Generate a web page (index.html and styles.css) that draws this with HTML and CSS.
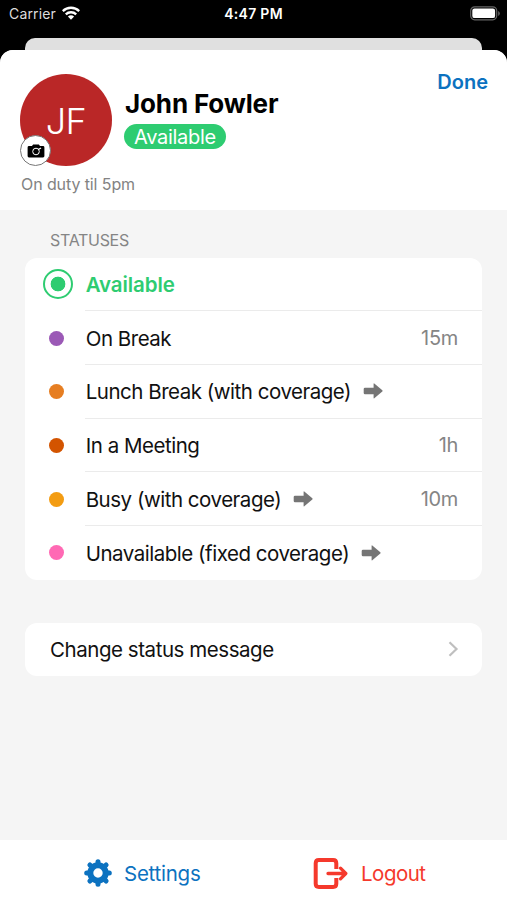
FILE: index.html
```html
<!DOCTYPE html>
<html lang="en">
<head>
<meta charset="utf-8">
<title>Status</title>
<link rel="stylesheet" href="styles.css">
</head>
<body>
<div class="statusbar">
  <div class="carrier"><span>Carrier</span>
    <svg width="18" height="14" viewBox="0 0 18 14"><g fill="none" stroke="#fff" stroke-width="2.3"><path d="M.8 5.1a11.7 11.7 0 0 1 16.4 0"/><path d="M3.8 8.4a7.4 7.4 0 0 1 10.4 0"/></g><path fill="#fff" d="M9 13.8L5.9 10.6a4.5 4.5 0 0 1 6.2 0z"/></svg>
  </div>
  <div class="clock">4:47 PM</div>
  <svg class="battery" width="31" height="15" viewBox="0 0 31 15"><rect x=".7" y=".8" width="26" height="13" rx="4" fill="none" stroke="#656565" stroke-width="1.2"/><rect x="2.3" y="2.5" width="22.8" height="9.6" rx="2.2" fill="#fff"/><path d="M28.2 5v5q1.6-.8 1.6-2.5T28.2 5" fill="#656565"/></svg>
</div>
<div class="behind"></div>
<main class="sheet">
  <header class="profile">
    <div class="person">
      <div class="avatar"><span>JF</span>
        <div class="camera"><svg width="18" height="14" viewBox="0 0 18 14"><path d="M2 2h3l1.1-1.600h5.800L13 2h3q1.400 0 1.400 1.400v8.700q0 1.400-1.400 1.400H2Q.6 13.500.6 12.100V3.400Q.6 2 2 2z"/><circle cx="9" cy="7.500" r="3.300" fill="none" stroke="#fff" stroke-width="1"/><path d="M11.400 5.500l2.600-1.500" stroke="#fff" stroke-width="1.200"/></svg></div>
      </div>
      <div class="identity"><h1>John Fowler</h1><span class="pill">Available</span></div>
      <div class="done">Done</div>
    </div>
    <p class="message">On duty til 5pm</p>
  </header>
  <section class="content">
    <h2>STATUSES</h2>
    <ul class="card">
      <li><span class="mark"><i class="radio"></i></span><div class="line selected"><span>Available</span></div></li>
      <li><span class="mark"><i class="dot purple"></i></span><div class="line"><span>On Break</span><time>15m</time></div></li>
      <li><span class="mark"><i class="dot orange"></i></span><div class="line"><span>Lunch Break (with coverage)</span><svg class="arrow" width="21" height="16" viewBox="0 0 21 16"><path d="M2 4.700h8.600V.8q0-.8.700-.3l8 6.700q.8.700 0 1.400l-8 6.700q-.7.500-.7-.3v-3.800H2q-1.300 0-1.300-1.300V6q0-1.300 1.300-1.300z"/></svg></div></li>
      <li><span class="mark"><i class="dot rust"></i></span><div class="line"><span>In a Meeting</span><time>1h</time></div></li>
      <li><span class="mark"><i class="dot amber"></i></span><div class="line"><span>Busy (with coverage)</span><svg class="arrow" width="21" height="16" viewBox="0 0 21 16"><path d="M2 4.700h8.600V.8q0-.8.700-.3l8 6.700q.8.700 0 1.400l-8 6.700q-.7.500-.7-.3v-3.800H2q-1.300 0-1.300-1.300V6q0-1.300 1.300-1.300z"/></svg><time>10m</time></div></li>
      <li><span class="mark"><i class="dot pink"></i></span><div class="line"><span>Unavailable (fixed coverage)</span><svg class="arrow" width="21" height="16" viewBox="0 0 21 16"><path d="M2 4.700h8.600V.8q0-.8.700-.3l8 6.700q.8.700 0 1.400l-8 6.700q-.7.500-.7-.3v-3.800H2q-1.300 0-1.300-1.300V6q0-1.300 1.300-1.300z"/></svg></div></li>
    </ul>
    <div class="card change"><span>Change status message</span><svg width="12" height="18" viewBox="0 0 12 18"><path d="M2.500 2.300L9.500 9l-7 6.700" fill="none" stroke="#bfbfbf" stroke-width="2.200"/></svg></div>
  </section>
  <footer>
    <div class="action settings"><svg width="28" height="28" viewBox="-14 -14 28 28"><circle r="7.700" fill="none" stroke="currentColor" stroke-width="6"/><g stroke="currentColor" stroke-width="5" stroke-linecap="round"><path d="M0-9v-2.300M0 9v2.300M9 0h2.300M-9 0h-2.300M6.700-6.700l1.400-1.400M-6.700-6.700l-1.400-1.400M6.700 6.700l1.400 1.400M-6.700 6.700l-1.400 1.400"/></g></svg><span>Settings</span></div>
    <div class="action logout"><svg width="35" height="31" viewBox="0 0 35 31"><g fill="none" stroke="currentColor"><path d="M23.300 11V5.300q0-3.200-3.200-3.200H5.900q-3.200 0-3.200 3.200v20.400q0 3.200 3.200 3.200h14.200q3.200 0 3.200-3.200V20" stroke-width="4"/><path d="M15 15.500h17M27.500 10.200l5.300 5.300-5.300 5.300" stroke-width="3.300" stroke-linecap="round" stroke-linejoin="round"/></g></svg><span>Logout</span></div>
  </footer>
</main>
</body>
</html>
```
FILE: styles.css
```css
* { box-sizing: border-box; }
body { margin: 0; width: 507px; height: 900px; overflow: hidden; background: #000; font-family: Inter, "Liberation Sans", sans-serif; color: #111; display: flex; flex-direction: column; }
h1, h2, p, ul { margin: 0; padding: 0; }
svg { flex: none; display: block; }
.statusbar { height: 38px; display: grid; grid-template-columns: 1fr auto 1fr; padding: 0 6px 0 9px; color: #fff; font-size: 14px; line-height: 28px; align-items: start; }
.carrier { display: flex; gap: 6px; color: #ddd; letter-spacing: .15px; }
.carrier svg { margin-top: 6px; }
.clock { font-weight: 600; letter-spacing: .3px; margin-left: -3px; }
.battery { justify-self: end; margin-top: 6px; }
.behind { height: 12px; margin: 0 25px; background: #e0e0e0; border-radius: 10px 10px 0 0; }
.sheet { height: 850px; background: #f5f5f5; border-radius: 13px 13px 0 0; overflow: hidden; display: flex; flex-direction: column; }
.profile { height: 160px; background: #fff; padding: 24px 19px 0 20px; }
.person { display: flex; height: 92px; }
.avatar { position: relative; width: 92px; height: 92px; border-radius: 50%; background: #ba2727; color: #fff; display: flex; align-items: center; justify-content: center; font-size: 36px; font-weight: 300; letter-spacing: -.5px; padding-top: 2px; }
.camera { position: absolute; left: 0; bottom: 0; width: 31px; height: 31px; border: 1.500px solid #777; border-radius: 50%; background: #fff; display: flex; align-items: center; justify-content: center; }
.identity { margin-left: 12px; padding-top: 14px; flex: 1; }
h1 { font-size: 26px; line-height: 31px; font-weight: 700; letter-spacing: -.15px; color: #000; white-space: nowrap; padding-left: 1px; }
.pill { display: flex; width: 102px; height: 25px; margin-top: 5px; border-radius: 13px; background: #2ecc71; color: #fff; align-items: center; justify-content: center; font-size: 20px; letter-spacing: -.3px; }
.done { color: #0c72c0; font-size: 20px; font-weight: 600; line-height: 24px; margin-top: -4px; }
.message { margin-top: 8px; padding-left: 1px; color: #838383; font-size: 16px; line-height: 20px; letter-spacing: -.1px; }
.content { flex: 1; padding: 0 25px; }
h2 { color: #858585; font-weight: 400; font-size: 16px; line-height: 20px; letter-spacing: -.3px; padding: 20px 0 0 25px; height: 47.500px; }
.card { background: #fff; border-radius: 12px; list-style: none; width: 457px; }
li { display: flex; height: 53.700px; }
.mark { width: 60px; display: flex; align-items: center; padding-left: 23.500px; }
.dot { width: 15px; height: 15px; border-radius: 50%; }
.radio { width: 30px; height: 30px; margin-left: -5.500px; border: 2.500px solid #2ecc71; border-radius: 50%; background: radial-gradient(circle, #2ecc71 7px, #fff 7.700px); }
.purple { background: #9b59b6; }
.orange { background: #e67e22; }
.rust { background: #d35400; }
.amber { background: #f39c12; }
.pink { background: #ff69b4; }
.line { flex: 1; display: flex; align-items: center; padding-right: 24px; font-size: 20.500px; letter-spacing: -.48px; border-bottom: 1.500px solid #ebebeb; white-space: nowrap; }
.line > span { padding: 1px 0 0 .7px; }
li:last-child .line { border: 0; }
.line.selected { color: #2ecc71; font-weight: 600; letter-spacing: -.1px; }
.arrow { margin-left: 12px; fill: #757575; }
time { margin-left: auto; color: #858585; font-size: 20px; letter-spacing: -.3px; padding-top: 1px; }
.change { margin-top: 43px; height: 53.500px; padding: 0 23px 0 25px; display: flex; align-items: center; justify-content: space-between; font-size: 20.500px; letter-spacing: -.45px; }
.change span { padding-top: 1px; }
footer { height: 60px; background: #fff; display: grid; grid-template-columns: 229px 1fr; padding-left: 84px; padding-top: 6px; }
.action { display: flex; align-items: center; gap: 12px; height: 54px; font-size: 20.500px; letter-spacing: -.25px; }
.action span { padding-top: 1px; }
.settings { color: #0c72c0; }
.logout { color: #f5392c; gap: 13px; letter-spacing: -.5px; }
```
